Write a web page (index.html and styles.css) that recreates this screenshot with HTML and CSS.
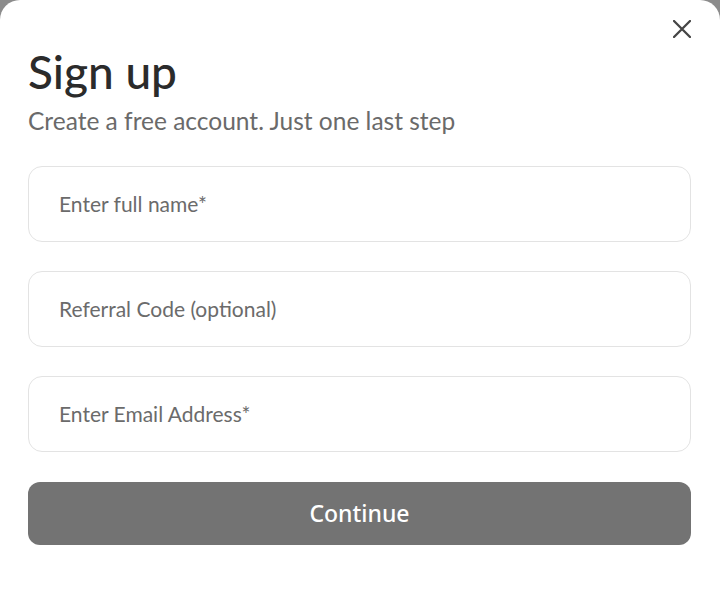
FILE: index.html
```html
<!DOCTYPE html>
<html lang="en">
<head>
<meta charset="utf-8">
<title>Sign up</title>
<link rel="stylesheet" href="styles.css">
</head>
<body>
<div class="modal">
  <button class="close" aria-label="Close">
    <svg width="18" height="18" viewBox="0 0 18 18"><path d="M1 1 L17 17 M17 1 L1 17" stroke="#454545" stroke-width="2.3" stroke-linecap="round" fill="none"/></svg>
  </button>
  <h1 class="title">Sign up</h1>
  <p class="subtitle">Create a free account. Just one last step</p>
  <form class="form">
    <input class="field" type="text" placeholder="Enter full name*">
    <input class="field" type="text" placeholder="Referral Code (optional)">
    <input class="field" type="email" placeholder="Enter Email Address*">
    <button class="continue" type="button">Continue</button>
  </form>
</div>
</body>
</html>
```
FILE: styles.css
```css
html, body {
  margin: 0;
  padding: 0;
}
body {
  background: #8c8c8c;
  font-family: Lato, "Noto Sans", sans-serif;
}
.modal {
  position: relative;
  background: #fff;
  min-height: 593px;
  box-sizing: border-box;
  border-radius: 20px 20px 0 0;
  padding: 44px 29px 0 28px;
}
.close {
  position: absolute;
  top: 20px;
  right: 29px;
  width: 18px;
  height: 18px;
  padding: 0;
  border: 0;
  background: none;
  display: flex;
}
.title {
  margin: 0;
  font-size: 46px;
  font-weight: 500;
  line-height: 1.2;
  color: #2b2b2b;
}
.subtitle {
  margin: 7px 0 0;
  font-size: 24.5px;
  line-height: 1.2;
  color: #6a6a6a;
}
.form {
  display: flex;
  flex-direction: column;
  gap: 29px;
  margin-top: 30px;
}
.field {
  height: 76px;
  box-sizing: border-box;
  border: 1px solid #e3e3e3;
  border-radius: 14px;
  padding: 0 30px;
  font-family: Lato, sans-serif;
  font-size: 21px;
  color: #333;
  background: #fff;
  outline: none;
}
.field::placeholder {
  color: #6b6b6b;
}
.continue {
  margin-top: 1px;
  height: 63px;
  border: 0;
  border-radius: 12px;
  background: #737373;
  color: #fff;
  font-family: "Noto Sans", sans-serif;
  font-size: 23px;
  font-weight: 500;
}
```
